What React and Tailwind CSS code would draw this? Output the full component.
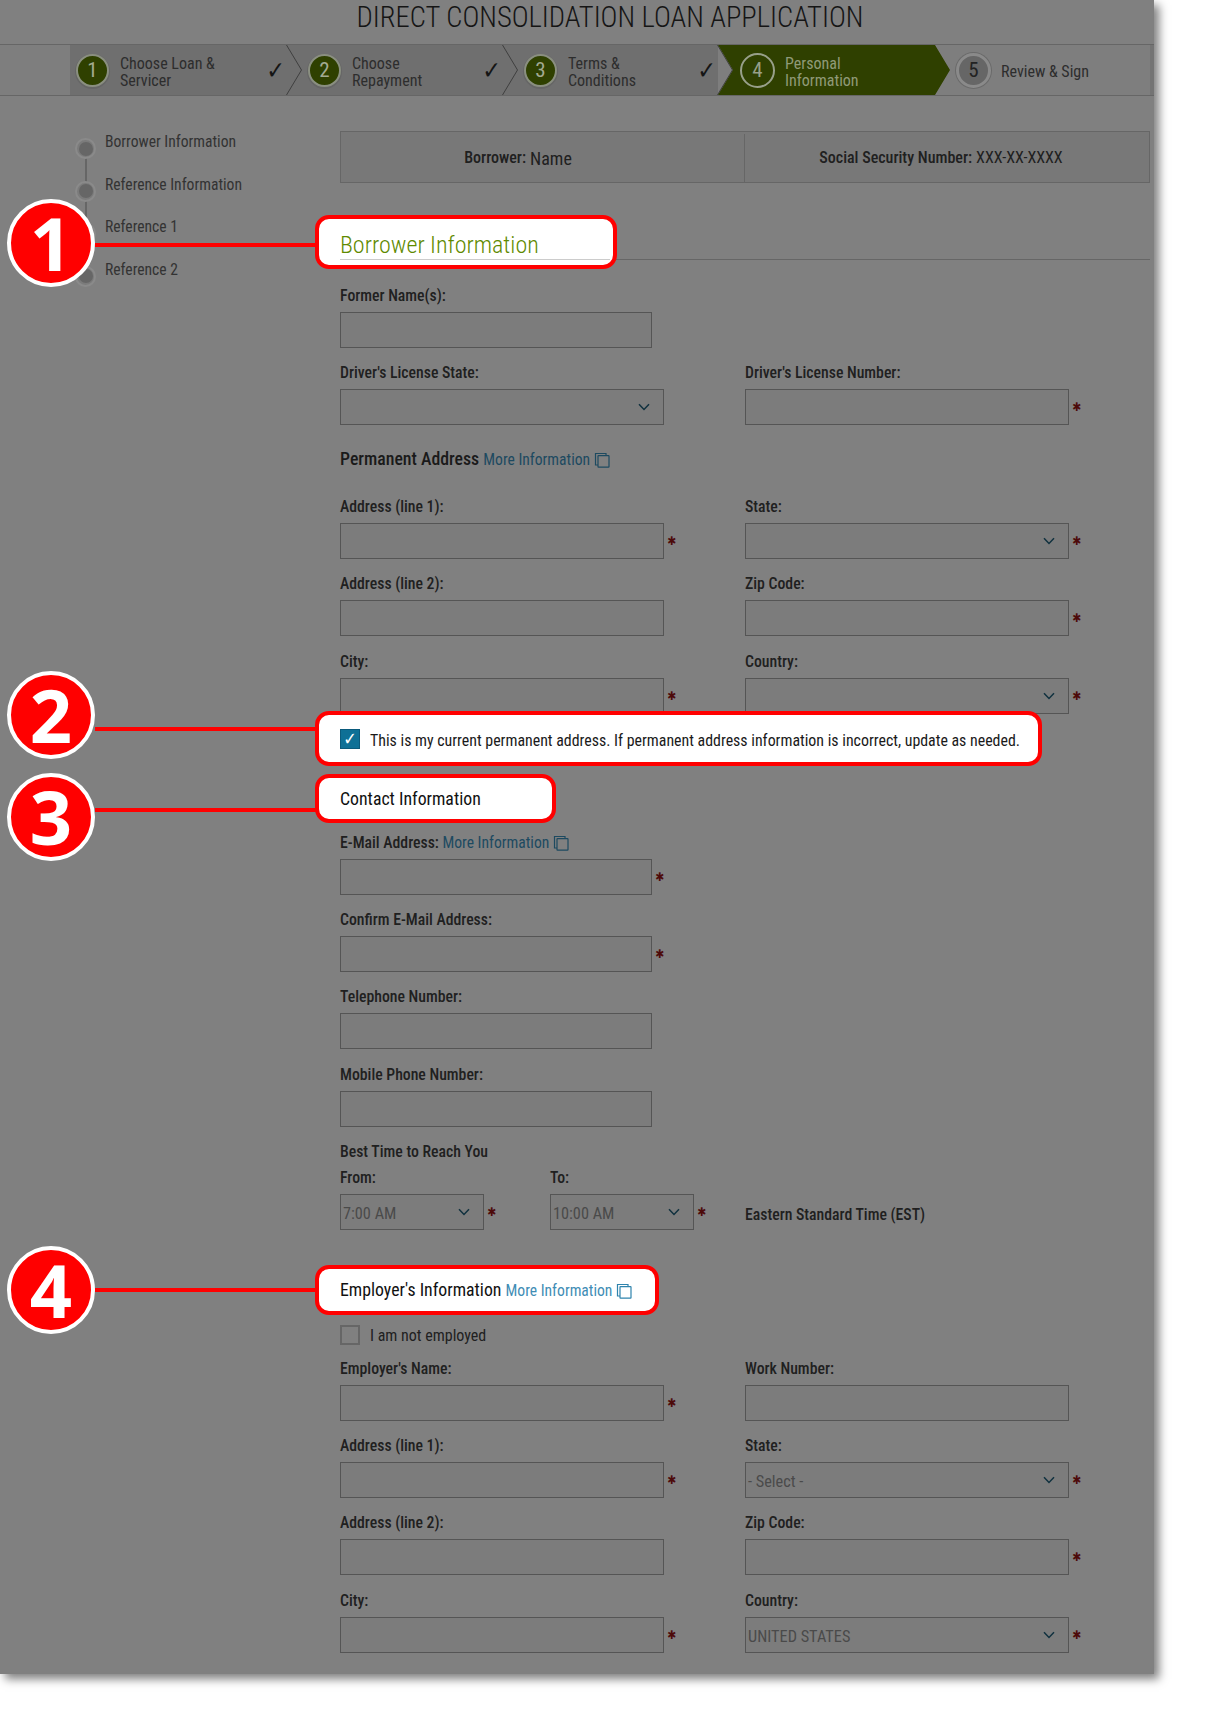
import React from "react";

const Req = () => <span className="ml-[3px] text-[12px] leading-none text-[#4d0a0a] font-['DejaVu_Sans',sans-serif]">✱</span>;

const Chevron = () => (
  <svg width="12" height="8" viewBox="0 0 12 8" fill="none" stroke="#10313f" strokeWidth="1.5" className="absolute right-[13px] top-[13px]">
    <path d="M1 1.2 L6 6.4 L11 1.2" />
  </svg>
);

const CopyIcon = ({ color }) => (
  <svg width="16" height="16" viewBox="0 0 16 16" fill="none" stroke={color} strokeWidth="1.2" className="inline-block ml-[4px] align-[-3px]">
    <path d="M4 13 H1.5 V1.5 H12 V3" />
    <rect x="4" y="3.6" width="11" height="11.6" rx="0.5" />
  </svg>
);

const More = ({ color = "#1d4a60", light }) => (
  <span className={light ? "text-[#3f8db5] text-[15.6px] [font-stretch:79%] font-normal" : "text-[#1d4a60] text-[15.6px] [font-stretch:79%] font-normal"}>
    More Information
    <CopyIcon color={color} />
  </span>
);

const Label = ({ children }) => (
  <div className="h-5 mb-[7px] leading-[22px] text-[15.75px] font-medium text-[#202020]">{children}</div>
);

const Field = ({ label, w, select, value, req }) => (
  <div>
    <Label>{label}</Label>
    <div className="flex items-center">
      {select ? (
        <div className={`${w} relative h-9 border border-[#555] bg-[#7c7c7c] pl-[2px] leading-[38px] text-[16.3px] text-[#4a4a4a]`}>
          {value}
          <Chevron />
        </div>
      ) : (
        <input className={`${w} h-9 border border-[#555] bg-[#7c7c7c]`} />
      )}
      {req && <Req />}
    </div>
  </div>
);

const Big = ({ n, pos }) => (
  <div className={`absolute ${pos} z-30 flex h-[88px] w-[88px] items-center justify-center rounded-full border-[4px] border-white bg-[#ff0000] text-[74px] font-bold leading-none text-white [font-stretch:100%] font-['Open_Sans',sans-serif]`}>
    {n}
  </div>
);

const Circle = ({ n, kind }) => {
  const cls =
    kind === "done"
      ? "h-[33px] w-[33px] bg-[#2f4000] border-2 border-[#8a8f80] text-[#a3aa92] shadow-[0_1px_0_1px_#666666]"
      : kind === "cur"
      ? "h-[35px] w-[35px] border-2 border-[#98a08a] text-[#98a08a]"
      : "h-[35px] w-[35px] bg-[#666666] border-[3px] border-[#8a8a8a] text-[#222222] shadow-[0_0_0_1px_#6a6a6a]";
  return <div className={`${cls} mt-[1px] shrink-0 rounded-full flex items-center justify-center text-[21px] leading-none`}>{n}</div>;
};

const Arrow = () => (
  <svg width="16" height="50" viewBox="0 0 16 50" fill="none" stroke="#3f3f3f" strokeWidth="1" className="absolute right-[-15px] top-0 z-10">
    <path d="M0.5 0 L15.5 25 L0.5 50" />
  </svg>
);

const Tick = () => <span className="absolute right-[2px] top-[13px] text-[25px] leading-none text-[#151515] font-['DejaVu_Sans',sans-serif]">✓</span>;

const DoneStep = ({ n, a, b, w, pl }) => (
  <div className={`${w} ${pl} relative flex h-full items-center bg-[#6f6f6f]`}>
    <Circle n={n} kind="done" />
    <div className="ml-[11px] pt-[3px] text-[16px] leading-[17px] text-[#2d2d2d]">
      {a}
      <br />
      {b}
    </div>
    <Tick />
    <Arrow />
  </div>
);

const Nav = ({ children }) => (
  <div className="relative flex h-[42.6px] items-start">
    <div className="mt-[7px] flex h-[21px] w-[21px] shrink-0 items-center justify-center rounded-full border-2 border-[#8a8a8a] bg-[#7b7b7b]">
      <div className="h-[14px] w-[14px] rounded-full bg-[#666666]" />
    </div>
    <div className="ml-[9px] mt-px leading-5 text-[15.6px] text-[#333333]">{children}</div>
  </div>
);

export default function App() {
  return (
    <div className="min-h-[1734px] bg-white [font-stretch:84%] font-['Roboto',sans-serif]">
      <div className="w-[1154px] bg-[#808080] shadow-[5px_5px_9px_rgba(0,0,0,0.5)]">
        <h1 className="h-[44px] pt-[1px] text-center text-[28.6px] font-light leading-[32px] text-[#151515] pl-[66px]">
          DIRECT CONSOLIDATION LOAN APPLICATION
        </h1>

        <div className="flex h-[52px] border-y border-[#666666] bg-[#7e7e7e]">
          <div className="w-[70px]" />
          <DoneStep n="1" a="Choose Loan &" b="Servicer" w="w-[217px]" pl="pl-[6px]" />
          <DoneStep n="2" a="Choose" b="Repayment" w="w-[216px]" pl="pl-[21px]" />
          <DoneStep n="3" a="Terms &" b="Conditions" w="w-[215px]" pl="pl-[21px]" />
          <div className="relative z-20 flex h-full w-[232px] items-center bg-[#2f4000] pl-[22px] [clip-path:polygon(0_0,217px_0,232px_50%,217px_100%,0_100%,15px_50%)]">
            <Circle n="4" kind="cur" />
            <div className="ml-[10px] pt-[3px] text-[16px] leading-[17px] text-[#8f9a78]">
              Personal
              <br />
              Information
            </div>
          </div>
          <div className="flex flex-1 items-center pl-[6px] border-r-[4px] border-[#747474]">
            <Circle n="5" kind="next" />
            <div className="ml-[10px] pt-[3px] text-[16px] text-[#2d2d2d]">Review &amp; Sign</div>
          </div>
        </div>

        <div className="flex pt-[35px] pb-[21px]">
          <div className="w-[340px] shrink-0 pl-[75px]">
            <div className="relative">
              <div className="absolute left-[10px] top-[15px] h-[130px] w-[2px] bg-[#666666]" />
              <Nav>Borrower Information</Nav>
              <Nav>Reference Information</Nav>
              <Nav>Reference 1</Nav>
              <Nav>Reference 2</Nav>
            </div>
          </div>

          <div className="w-[810px]">
            <div className="grid h-[52px] grid-cols-2 border border-[#666666] bg-[#787878] pt-[2px] text-[16px] text-[#202020]">
              <div className="flex items-center justify-center border-r border-[#666666] pr-[49px]">
                <span className="mr-1 font-medium">Borrower:</span> <span className="text-[18px]">Name</span>
              </div>
              <div className="flex items-center justify-center pr-[12px]">
                <span className="mr-1 font-medium">Social Security Number:</span> XXX-XX-XXXX
              </div>
            </div>

            {/* Borrower Information */}
            <div className="relative mt-[42px] h-[35px] border-b border-[#666666]">
              <div className="absolute -left-[25px] -top-[10px] z-10 h-[54px] w-[302px] rounded-[14px] border-[4px] border-[#ff0000] bg-white" />
              <div className="absolute -left-[245px] top-[18px] z-10 h-1 w-[222px] bg-[#ff0000]" />
              <Big n="1" pos="-left-[333px] -top-[26px]" />
              <div className="relative z-20 h-[35px] w-[270px] border-b border-[#cccccc] pt-[5px] text-[24px] font-light leading-[30px] text-[#5f8a00]">
                Borrower Information
              </div>
            </div>

            <div className="mt-[25px]">
              <Field label="Former Name(s):" w="w-[312px]" />
            </div>
            <div className="mt-[14px] grid grid-cols-[405px_405px]">
              <Field label="Driver's License State:" w="w-[324px]" select />
              <Field label="Driver's License Number:" w="w-[324px]" req />
            </div>

            <div className="mt-[24px] h-5 leading-5 text-[17.8px] font-medium text-[#1a1a1a]">
              Permanent Address <More />
            </div>

            <div className="mt-[27px] grid grid-cols-[405px_405px] gap-y-[14.4px]">
              <Field label="Address (line 1):" w="w-[324px]" req />
              <Field label="State:" w="w-[324px]" select req />
              <Field label="Address (line 2):" w="w-[324px]" />
              <Field label="Zip Code:" w="w-[324px]" req />
              <Field label="City:" w="w-[324px]" req />
              <Field label="Country:" w="w-[324px]" select req />
            </div>

            {/* Current address */}
            <div className="relative mt-[15px] flex h-5 items-center">
              <div className="absolute -left-[25px] -top-[18px] z-10 h-[55px] w-[727px] rounded-[14px] border-[4px] border-[#ff0000] bg-white" />
              <div className="absolute -left-[245px] -top-[2px] z-10 h-1 w-[222px] bg-[#ff0000]" />
              <Big n="2" pos="-left-[333px] -top-[58px]" />
              <div className="relative z-20 flex h-5 w-5 items-center justify-center border border-[#0a5a7c] bg-[#0e7096]">
                <span className="text-[18px] font-bold leading-none text-white font-['DejaVu_Sans',sans-serif]">✓</span>
              </div>
              <span className="relative z-20 ml-[10px] pt-[5px] text-[15.9px] text-[#1a1a1a]">
                This is my current permanent address. If permanent address information is incorrect, update as needed.
              </span>
            </div>

            {/* Contact */}
            <div className="relative mt-[40px] h-5">
              <div className="absolute -left-[25px] -top-[15px] z-10 h-[49px] w-[241px] rounded-[14px] border-[4px] border-[#ff0000] bg-white" />
              <div className="absolute -left-[245px] top-[19px] z-10 h-1 w-[222px] bg-[#ff0000]" />
              <Big n="3" pos="-left-[333px] -top-[16px]" />
              <div className="relative z-20 leading-5 text-[17.8px] text-[#111111]">Contact Information</div>
            </div>

            <div className="mt-[23px] flex flex-col">
              <Field label={<>E-Mail Address: <More /></>} w="w-[312px]" req />
              <div className="mt-[14px]"><Field label="Confirm E-Mail Address:" w="w-[312px]" req /></div>
              <div className="mt-[14px]"><Field label="Telephone Number:" w="w-[312px]" /></div>
              <div className="mt-[15px]"><Field label="Mobile Phone Number:" w="w-[312px]" /></div>
            </div>

            <div className="mt-[15px] mb-[5px] h-5 leading-5 text-[15.75px] font-medium text-[#202020]">Best Time to Reach You</div>
            <div className="flex items-end">
              <div className="w-[210px]">
                <Field label="From:" w="w-[144px]" select value="7:00 AM" req />
              </div>
              <div className="w-[195px]">
                <Field label="To:" w="w-[144px]" select value="10:00 AM" req />
              </div>
              <div className="h-9 leading-[42px] text-[15.75px] font-medium text-[#202020]">Eastern Standard Time (EST)</div>
            </div>

            {/* Employer */}
            <div className="relative mt-[50px] h-5">
              <div className="absolute -left-[25px] -top-[15px] z-10 h-[50px] w-[344px] rounded-[14px] border-[4px] border-[#ff0000] bg-white" />
              <div className="absolute -left-[245px] top-[8px] z-10 h-1 w-[222px] bg-[#ff0000]" />
              <Big n="4" pos="-left-[333px] -top-[34px]" />
              <div className="relative z-20 leading-5 text-[17.8px] text-[#111111]">
                Employer's Information <More light color="#2f84ad" />
              </div>
            </div>

            <div className="mt-[25px] flex h-5 items-center">
              <div className="h-5 w-5 border-2 border-[#666666]" />
              <span className="ml-[10px] pt-[3px] text-[16px] text-[#202020]">I am not employed</span>
            </div>

            <div className="mt-[13px] grid grid-cols-[405px_405px] gap-y-[14.3px]">
              <Field label="Employer's Name:" w="w-[324px]" req />
              <Field label="Work Number:" w="w-[324px]" />
              <Field label="Address (line 1):" w="w-[324px]" req />
              <Field label="State:" w="w-[324px]" select value="- Select -" req />
              <Field label="Address (line 2):" w="w-[324px]" />
              <Field label="Zip Code:" w="w-[324px]" req />
              <Field label="City:" w="w-[324px]" req />
              <Field label="Country:" w="w-[324px]" select value="UNITED STATES" req />
            </div>
          </div>
        </div>
      </div>
    </div>
  );
}
